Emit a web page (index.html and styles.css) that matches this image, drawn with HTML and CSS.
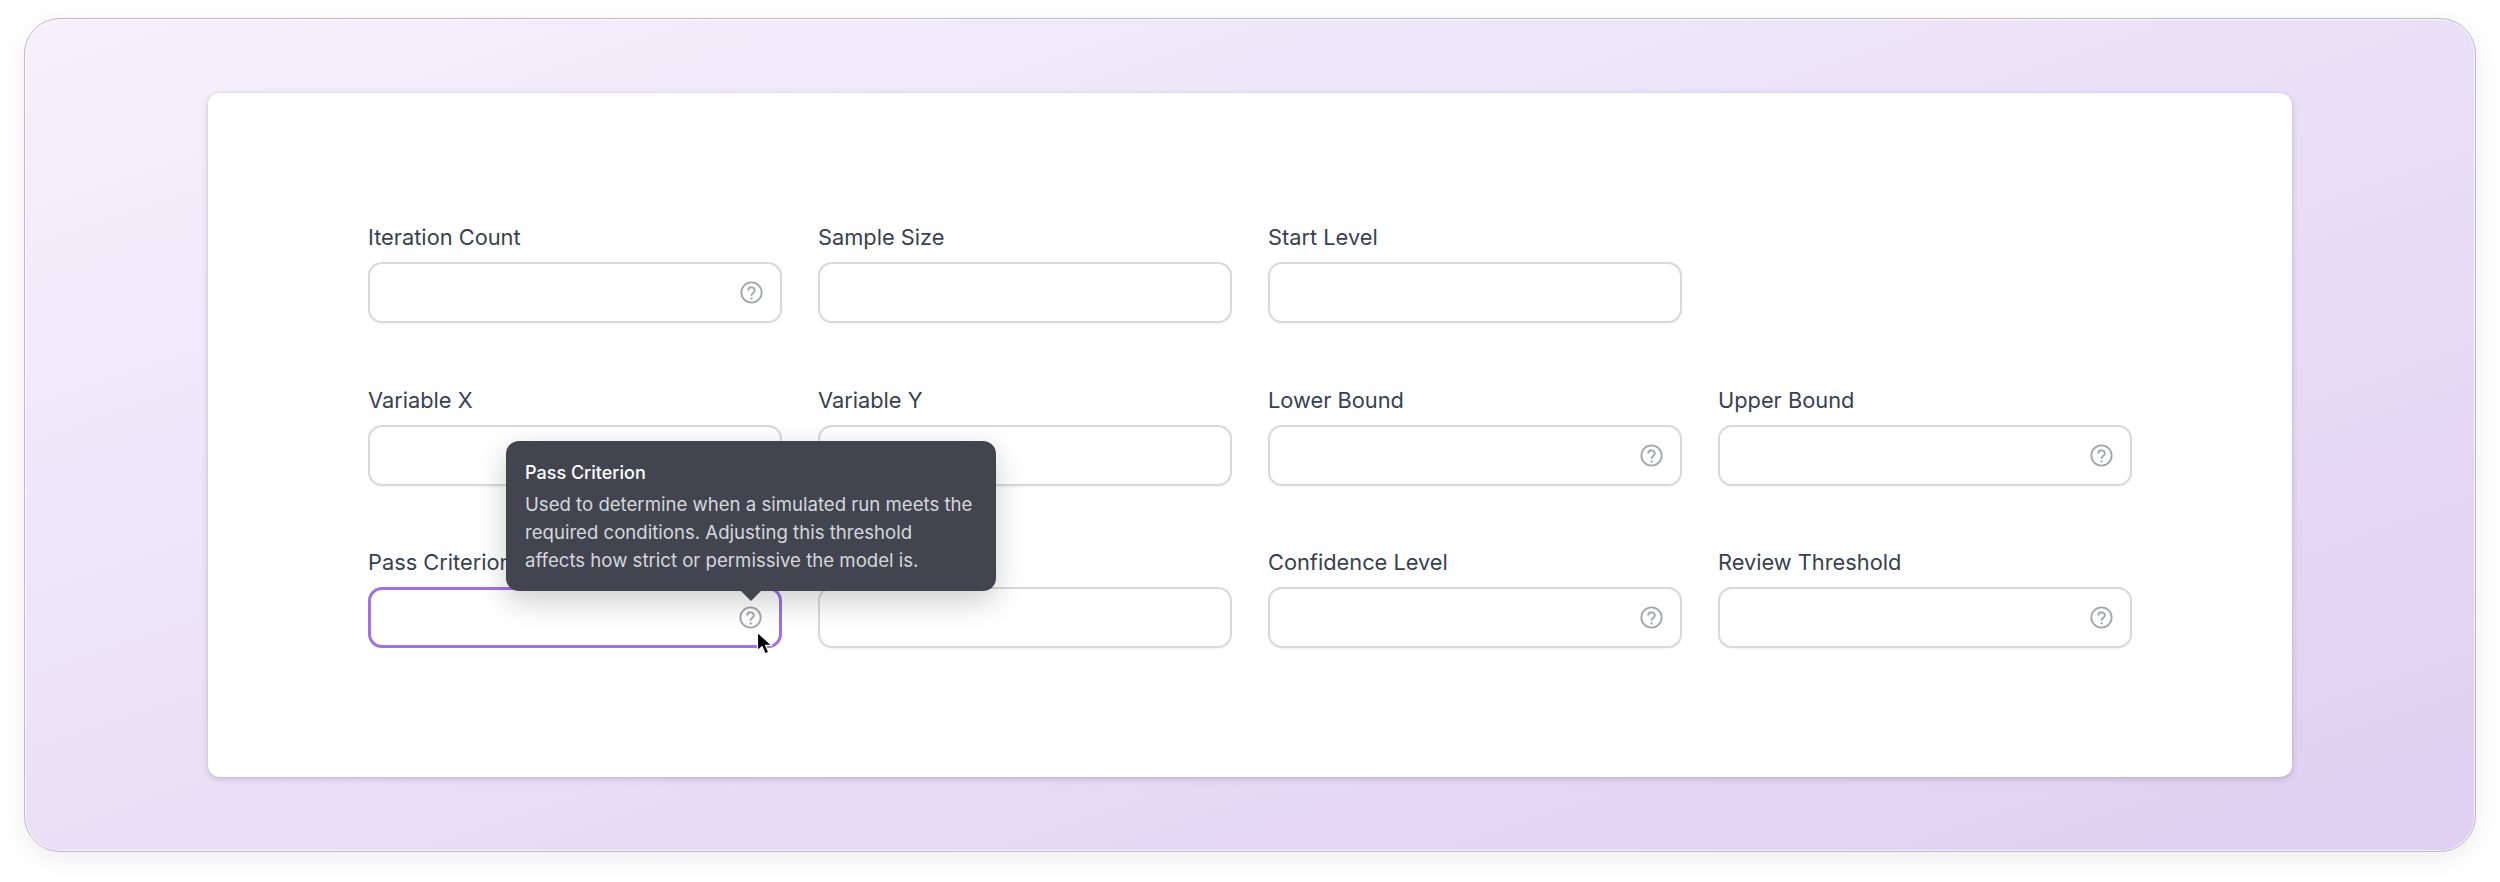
FILE: index.html
```html
<!DOCTYPE html>
<html lang="en">
<head>
<meta charset="utf-8">
<title>Simulation settings</title>
<link rel="stylesheet" href="styles.css">
</head>
<body>
<svg class="sprite" width="0" height="0" aria-hidden="true">
  <symbol id="help" viewBox="0 0 24 24"><circle cx="12" cy="12" r="10.6" fill="none" stroke="currentColor" stroke-width="1.9"/><path d="M8.6 9.2a3.5 3.5 0 0 1 6.9.8c0 2.3-3.4 2.6-3.4 4.6" fill="none" stroke="currentColor" stroke-width="1.9" stroke-linecap="round"/><circle cx="12.1" cy="18.2" r="1.2" fill="currentColor"/></symbol>
</svg>
<main class="frame">
  <section class="card">
    <form class="grid">
      <div class="field"><label class="label">Iteration Count</label><div class="input"><svg class="help"><use href="#help"/></svg></div></div>
      <div class="field"><label class="label">Sample Size</label><div class="input"></div></div>
      <div class="field"><label class="label">Start Level</label><div class="input"></div></div>
      <div class="field"></div>
      <div class="field"><label class="label">Variable X</label><div class="input"></div></div>
      <div class="field"><label class="label">Variable Y</label><div class="input"></div></div>
      <div class="field"><label class="label">Lower Bound</label><div class="input"><svg class="help"><use href="#help"/></svg></div></div>
      <div class="field"><label class="label">Upper Bound</label><div class="input"><svg class="help"><use href="#help"/></svg></div></div>
      <div class="field"><label class="label">Pass Criterion</label>
        <div class="input input-focus"><svg class="help"><use href="#help"/></svg>
          <div class="tooltip">
            <div class="tooltip-title">Pass Criterion</div>
            <div class="tooltip-body">Used to determine when a simulated run meets the<br>required conditions. Adjusting this threshold<br>affects how strict or permissive the model is.</div>
          </div>
          <svg class="cursor" viewBox="0 0 18 26"><path d="M1.5 1.2v18.6l4.5-4.2 3.1 7.2 3.6-1.5-3.1-7h6.2z" fill="#000" stroke="#fff" stroke-width="1.2" stroke-linejoin="round"/></svg>
        </div>
      </div>
      <div class="field"><label class="label"></label><div class="input"></div></div>
      <div class="field"><label class="label">Confidence Level</label><div class="input"><svg class="help"><use href="#help"/></svg></div></div>
      <div class="field"><label class="label">Review Threshold</label><div class="input"><svg class="help"><use href="#help"/></svg></div></div>
    </form>
  </section>
</main>
</body>
</html>
```
FILE: styles.css
```css
* { box-sizing: border-box; }
html, body { margin: 0; height: 100%; background: #fff; }
body { padding: 18px 24px 30px; font-family: Inter, "Liberation Sans", sans-serif; overflow: hidden; }
.sprite { position: absolute; }
.frame {
  height: 834px;
  border: 1px solid #bfb8c8;
  border-radius: 36px;
  background: linear-gradient(to bottom right, #f4f1fc 0%, #e0cff1 100%);
  box-shadow: inset 0 0 0 1px rgba(255, 255, 255, .7), 0 6px 24px rgba(60, 50, 80, .09);
  display: flex;
  justify-content: center;
  padding-top: 74px;
}
.card {
  width: 2084px;
  height: 684px;
  background: #fff;
  border-radius: 12px;
  box-shadow: 0 0 0 1px rgba(60, 50, 80, .03), 0 2px 6px rgba(50, 40, 70, .2);
  padding: 128px 160px 0;
}
.grid { display: grid; grid-template-columns: repeat(4, 414px); column-gap: 36px; row-gap: 38.5px; }
.field { display: flex; flex-direction: column; gap: 9px; height: 124px; }
.label { display: block; height: 32px; font-size: 21.8px; line-height: 32px; color: #374151; }
.input {
  position: relative;
  height: 61px;
  border: 2px solid #d8d8dd;
  border-radius: 14px;
  background: #fff;
  box-shadow: 0 1px 2px rgba(0, 0, 0, .05);
  display: flex;
  align-items: center;
  justify-content: flex-end;
  padding-right: 17px;
}
.input-focus { border: 3px solid #9f70e8; padding-right: 17px; box-shadow: none; }
.help { width: 23px; height: 23px; color: #a3a5ad; }
.tooltip {
  position: absolute;
  left: 135px;
  bottom: 54px;
  width: 490px;
  padding: 18.5px 19px 17.5px;
  background: #42454f;
  border-radius: 13px;
  box-shadow: 0 10px 30px rgba(0, 0, 0, .2);
  font-size: 18px;
  line-height: 28px;
  z-index: 2;
}
.tooltip::after {
  content: "";
  position: absolute;
  left: 235px;
  bottom: -10px;
  border-style: solid;
  border-width: 10px 10px 0;
  border-color: #42454f transparent transparent;
}
.tooltip-title { color: #fff; font-weight: 500; margin-bottom: 2.5px; }
.tooltip-body { color: #d5d7dc; font-size: 18.6px; white-space: nowrap; }
.cursor { position: absolute; left: 385px; top: 41px; width: 18px; height: 26px; z-index: 3; }
```
